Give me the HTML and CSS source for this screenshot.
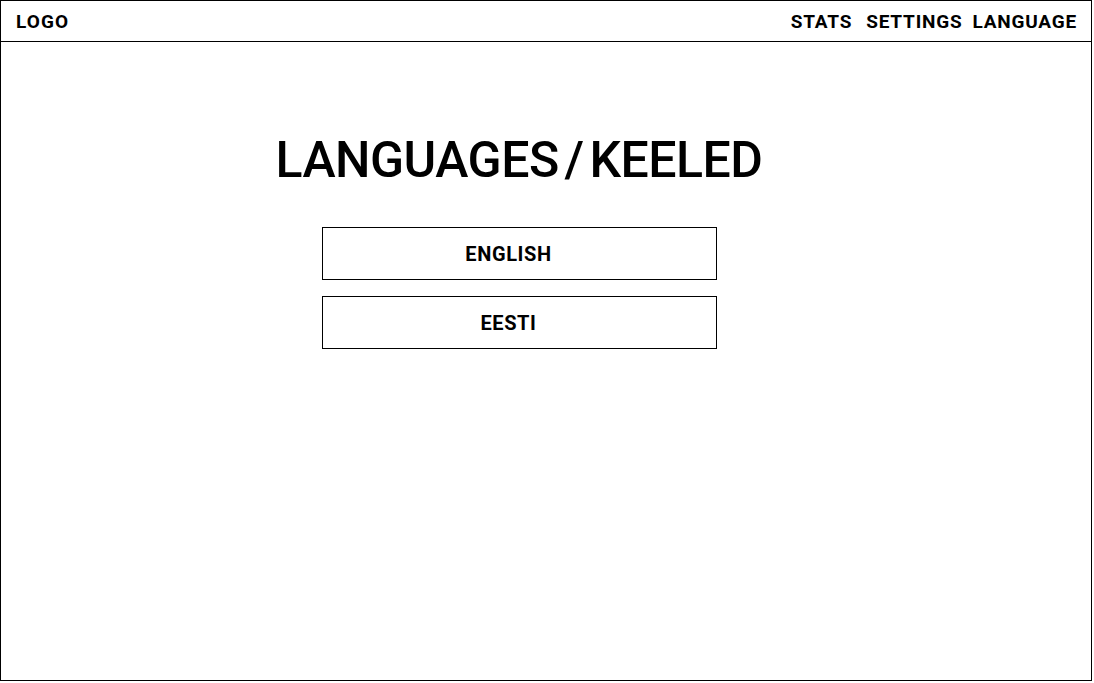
FILE: index.html
```html
<!DOCTYPE html>
<html lang="en">
<head>
<meta charset="utf-8">
<title>Languages</title>
<link rel="stylesheet" href="styles.css">
</head>
<body>
<div class="frame">
  <header class="topbar">
    <div class="logo">LOGO</div>
    <nav class="nav">
      <a class="nav-item" href="#">STATS</a>
      <a class="nav-item" href="#">SETTINGS</a>
      <a class="nav-item" href="#">LANGUAGE</a>
    </nav>
  </header>
  <main class="content">
    <h1 class="title">LANGUAGES / KEELED</h1>
    <div class="choices">
      <button class="choice">ENGLISH</button>
      <button class="choice">EESTI</button>
    </div>
  </main>
</div>
</body>
</html>
```

FILE: styles.css
```css
* { box-sizing: border-box; }
html, body { margin: 0; padding: 0; background: #fff; }
body {
  font-family: Roboto, "DejaVu Sans", sans-serif;
  color: #000;
}
.frame {
  width: 1092px;
  height: 681px;
  border: 1px solid #000;
  display: flex;
  flex-direction: column;
}
.topbar {
  height: 41px;
  border-bottom: 1px solid #000;
  display: flex;
  align-items: center;
  justify-content: space-between;
  padding: 0 14px 0 15px;
  font-weight: 700;
  font-size: 19px;
  letter-spacing: 0.8px;
}
.logo { letter-spacing: 1.1px; }
.nav { display: flex; gap: 10px; }
.nav-item { color: #000; text-decoration: none; }
.nav-item:first-child { margin-right: 4px; }
.content {
  display: flex;
  flex-direction: column;
  align-items: center;
  padding-right: 54px;
}
.title {
  margin: 88px 0 0;
  font-size: 50px;
  line-height: 60px;
  font-weight: 500;
  letter-spacing: -0.5px;
  word-spacing: -6px;
}
.choices {
  margin-top: 37px;
  display: flex;
  flex-direction: column;
  gap: 16px;
}
.choice {
  width: 395px;
  height: 53px;
  border: 1px solid #000;
  background: #fff;
  font-family: inherit;
  font-weight: 700;
  font-size: 20px;
  letter-spacing: 0.6px;
  color: #000;
  padding: 0 21px 0 0;
}
```
